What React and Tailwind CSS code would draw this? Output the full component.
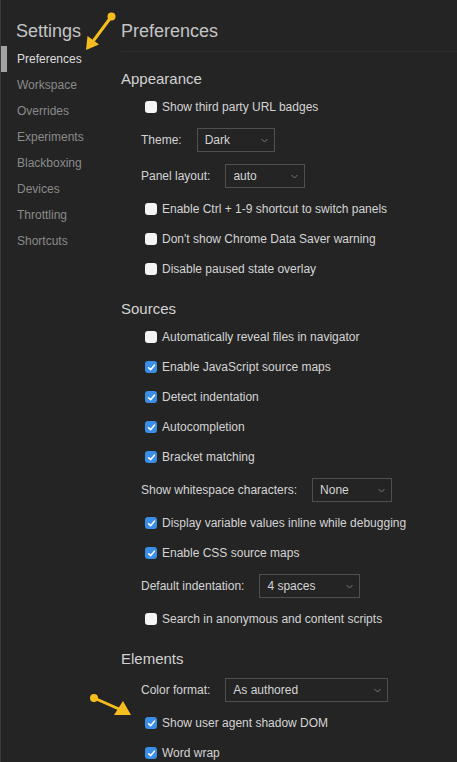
import React from 'react';

const navItems = [
  'Preferences',
  'Workspace',
  'Overrides',
  'Experiments',
  'Blackboxing',
  'Devices',
  'Throttling',
  'Shortcuts',
];

function Checkbox({ checked }) {
  if (checked) {
    return (
      <span className="w-[12px] h-[12px] rounded-[3px] bg-[#3a8ee6] flex items-center justify-center shrink-0">
        <svg width="9" height="9" viewBox="0 0 9 9">
          <path d="M1.6 4.8 L3.6 6.8 L7.4 2.2" fill="none" stroke="#fff" strokeWidth="1.6" strokeLinecap="round" strokeLinejoin="round" />
        </svg>
      </span>
    );
  }
  return <span className="w-[12px] h-[12px] rounded-[3px] bg-[#f4f4f4] shrink-0" />;
}

function CheckRow({ label, checked }) {
  return (
    <div className="h-[30px] pl-[24px] flex items-center gap-[5px] text-[12px] text-[#d4d4d4]">
      <Checkbox checked={checked} />
      <span>{label}</span>
    </div>
  );
}

function SelectRow({ label, value, width }) {
  return (
    <div className="h-[36px] pl-[20px] flex items-center gap-[15px] text-[12px] text-[#d4d4d4]">
      <span>{label}</span>
      <div
        className="h-[24px] border border-[#4f4f4f] flex items-center justify-between pl-[7px] pr-[6px]"
        style={{ width }}
      >
        <span>{value}</span>
        <svg width="7" height="5" viewBox="0 0 7 5">
          <path d="M0.5 1 L3.5 4 L6.5 1" fill="none" stroke="#7a7a7a" strokeWidth="1" />
        </svg>
      </div>
    </div>
  );
}

function Section({ title, first, children }) {
  return (
    <div className={first ? '' : 'mt-[12px]'}>
      <div className="h-[26px] flex items-center text-[15px] text-[#d2d2d2]">{title}</div>
      {children}
    </div>
  );
}

export default function App() {
  return (
    <div className="relative h-[762px] overflow-hidden bg-[#242424] border-l border-[#3b3b3b] flex font-['Liberation_Sans',Arial,sans-serif]">
      {/* sidebar */}
      <div className="w-[120px] shrink-0">
        <div className="h-[46px] pt-[20px] pl-[15px] text-[18px] leading-[22px] text-[#c4c4c4]">Settings</div>
        {navItems.map((item, i) => (
          <div key={item} className="relative h-[26px] flex items-center pl-[16px] text-[12px]">
            {i === 0 && <span className="absolute left-0 top-0 w-[6px] h-[26px] bg-[#a3a3a3]" />}
            <span className={i === 0 ? 'text-[#dedede]' : 'text-[#8a8a8a]'}>{item}</span>
          </div>
        ))}
      </div>

      {/* main */}
      <div className="flex-1">
        <div className="h-[52px] pt-[20px] text-[18px] leading-[22px] text-[#c4c4c4] border-b border-[#2f2f2f]">
          Preferences
        </div>
        <div className="mt-[14px]">
          <Section title="Appearance" first>
            <CheckRow label="Show third party URL badges" />
            <SelectRow label="Theme:" value="Dark" width={78} />
            <SelectRow label="Panel layout:" value="auto" width={80} />
            <CheckRow label="Enable Ctrl + 1-9 shortcut to switch panels" />
            <CheckRow label="Don't show Chrome Data Saver warning" />
            <CheckRow label="Disable paused state overlay" />
          </Section>
          <Section title="Sources">
            <CheckRow label="Automatically reveal files in navigator" />
            <CheckRow label="Enable JavaScript source maps" checked />
            <CheckRow label="Detect indentation" checked />
            <CheckRow label="Autocompletion" checked />
            <CheckRow label="Bracket matching" checked />
            <SelectRow label="Show whitespace characters:" value="None" width={80} />
            <CheckRow label="Display variable values inline while debugging" checked />
            <CheckRow label="Enable CSS source maps" checked />
            <SelectRow label="Default indentation:" value="4 spaces" width={101} />
            <CheckRow label="Search in anonymous and content scripts" />
          </Section>
          <Section title="Elements">
            <SelectRow label="Color format:" value="As authored" width={163} />
            <CheckRow label="Show user agent shadow DOM" checked />
            <CheckRow label="Word wrap" checked />
          </Section>
        </div>
      </div>

      {/* annotation arrows */}
      <svg className="absolute left-0 top-0 pointer-events-none" width="457" height="762">
        <g fill="#f6bd1f" stroke="#f6bd1f">
          <circle cx="110.5" cy="16.5" r="4" stroke="none" />
          <line x1="110.5" y1="16.5" x2="93" y2="40" strokeWidth="3" strokeLinecap="round" />
          <polygon points="85,50 86.5,36 98,44.5" stroke="none" />
          <circle cx="93" cy="698" r="4" stroke="none" />
          <line x1="93" y1="698" x2="118" y2="709" strokeWidth="3" strokeLinecap="round" />
          <polygon points="130,715 113,715 122,701" stroke="none" />
        </g>
      </svg>
    </div>
  );
}
